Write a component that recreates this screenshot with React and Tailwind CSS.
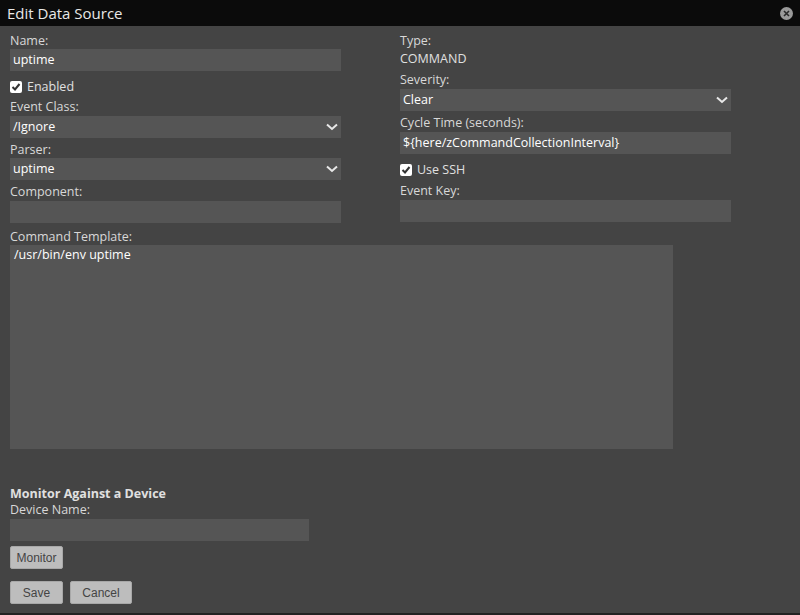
const F = { fontFamily: '"Open Sans", "Liberation Sans", sans-serif' };

function Chev() {
  return (
    <svg width="12" height="8" viewBox="0 0 12 8" className="absolute right-[3px] top-[7px]">
      <path d="M1 1.5 L6 6 L11 1.5" stroke="#e8e8e8" strokeWidth="2" fill="none" />
    </svg>
  );
}
function Label({ children, cls = "" }) {
  return <div className={"text-[12.5px] leading-[18px] text-[#d8d8d8] " + cls}>{children}</div>;
}
function Input({ value, select, w = "w-[331px]" }) {
  return (
    <div className={"relative h-[22px] bg-[#555555] text-[12.5px] leading-[22px] text-white pl-[3px] " + w}>
      {value}
      {select && <Chev />}
    </div>
  );
}
function Check({ label }) {
  return (
    <div className="flex items-center gap-[5px] h-[18px] text-[12.5px] text-[#e0e0e0]">
      <div className="w-[12px] h-[12px] bg-white rounded-[2px] flex items-center justify-center">
        <svg width="10" height="10" viewBox="0 0 10 10"><path d="M1.5 5 L4 7.5 L8.5 2" stroke="#333" strokeWidth="2" fill="none" /></svg>
      </div>
      {label}
    </div>
  );
}
function Btn({ children, cls }) {
  return (
    <div className={"h-[23px] bg-[#bdbdbd] rounded-[2px] flex items-center justify-center text-[12px] text-[#444] border border-[#a8a8a8] " + cls}
      style={{ fontFamily: '"Liberation Sans", Arial, sans-serif' }}>{children}</div>
  );
}

export default function App() {
  return (
    <div style={F} className="w-[800px] h-[615px] bg-[#444444] flex flex-col overflow-hidden border-b-2 border-[#222]">
      <div className="h-[26px] bg-[#0b0b0b] flex items-center justify-between px-[7px] shrink-0">
        <span className="text-[15px] text-[#e8e8e8]">Edit Data Source</span>
        <div className="w-[13px] h-[13px] rounded-full bg-[#9a9a9a] flex items-center justify-center">
          <svg width="7" height="7" viewBox="0 0 7 7"><path d="M1 1 L6 6 M6 1 L1 6" stroke="#2a2a2a" strokeWidth="1.6" /></svg>
        </div>
      </div>
      <div className="px-[10px] pt-[6px] flex flex-col">
        <div className="flex gap-[59px]">
          <div className="flex flex-col w-[331px]">
            <Label>Name:</Label>
            <div className="mt-[-1px]"><Input value="uptime" /></div>
            <div className="mt-[7px]"><Check label="Enabled" /></div>
            <Label cls="mt-[2px]">Event Class:</Label>
            <Input value="/Ignore" select />
            <Label cls="mt-[3px]">Parser:</Label>
            <div className="mt-[-1px]"><Input value="uptime" select /></div>
            <Label cls="mt-[3px]">Component:</Label>
            <Input />
          </div>
          <div className="flex flex-col w-[331px]">
            <Label>Type:</Label>
            <div className="text-[12.5px] leading-[18px] text-[#e0e0e0]">COMMAND</div>
            <Label cls="mt-[3px]">Severity:</Label>
            <Input value="Clear" select />
            <Label cls="mt-[3px]">Cycle Time (seconds):</Label>
            <Input value="${here/zCommandCollectionInterval}" />
            <div className="mt-[7px]"><Check label="Use SSH" /></div>
            <Label cls="mt-[3px]">Event Key:</Label>
            <Input />
          </div>
        </div>
        <Label cls="mt-[5px]">Command Template:</Label>
        <div className="w-[663px] h-[204px] bg-[#555555] text-[12.5px] leading-[20px] text-white pl-[4px] mt-[-1px]">/usr/bin/env uptime</div>
        <div className="mt-[36px] text-[12.5px] font-bold leading-[18px] text-[#e0e0e0]">Monitor Against a Device</div>
        <Label cls="mt-[-2px]">Device Name:</Label>
        <Input w="w-[299px]" />
        <Btn cls="w-[53px] mt-[5px]">Monitor</Btn>
        <div className="flex gap-[7px] mt-[12px]">
          <Btn cls="w-[53px]">Save</Btn>
          <Btn cls="w-[62px]">Cancel</Btn>
        </div>
      </div>
    </div>
  );
}
